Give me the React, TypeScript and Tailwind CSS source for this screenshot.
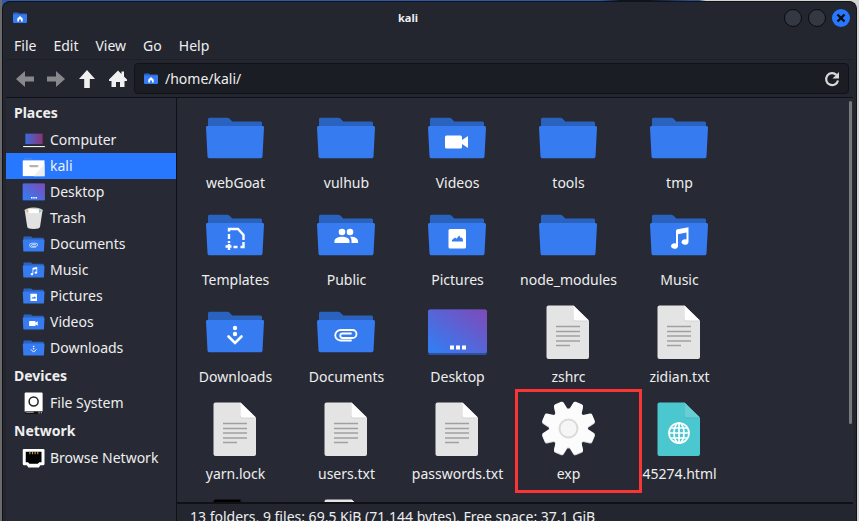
import type { ReactNode } from 'react';

type Kind =
  | 'folder' | 'videos' | 'templates' | 'public' | 'pictures' | 'music'
  | 'downloads' | 'documents' | 'desktop' | 'text' | 'html' | 'exec'
  | 'computer' | 'home' | 'trash' | 'drive' | 'network' | 'black';

type Place = { name: string; kind: Kind };

const places: Place[] = [
  { name: 'Computer', kind: 'computer' },
  { name: 'kali', kind: 'home' },
  { name: 'Desktop', kind: 'desktop' },
  { name: 'Trash', kind: 'trash' },
  { name: 'Documents', kind: 'documents' },
  { name: 'Music', kind: 'music' },
  { name: 'Pictures', kind: 'pictures' },
  { name: 'Videos', kind: 'videos' },
  { name: 'Downloads', kind: 'downloads' },
];

const files: Place[] = [
  { name: 'webGoat', kind: 'folder' },
  { name: 'vulhub', kind: 'folder' },
  { name: 'Videos', kind: 'videos' },
  { name: 'tools', kind: 'folder' },
  { name: 'tmp', kind: 'folder' },
  { name: 'Templates', kind: 'templates' },
  { name: 'Public', kind: 'public' },
  { name: 'Pictures', kind: 'pictures' },
  { name: 'node_modules', kind: 'folder' },
  { name: 'Music', kind: 'music' },
  { name: 'Downloads', kind: 'downloads' },
  { name: 'Documents', kind: 'documents' },
  { name: 'Desktop', kind: 'desktop' },
  { name: 'zshrc', kind: 'text' },
  { name: 'zidian.txt', kind: 'text' },
  { name: 'yarn.lock', kind: 'text' },
  { name: 'users.txt', kind: 'text' },
  { name: 'passwords.txt', kind: 'text' },
  { name: 'exp', kind: 'exec' },
  { name: '45274.html', kind: 'html' },
];

const emblems: Partial<Record<Kind, ReactNode>> = {
  videos: (
    <path d="M21.500 29.500h14q1.500 0 1.500 1.500v3l6-4v12l-6-4v3q0 1.500-1.500 1.500h-14q-1.500 0-1.500-1.500v-10q0-1.500 1.500-1.500z" fill="#fff" />
  ),
  templates: (
    <g fill="none" stroke="#fff" strokeWidth="2.400">
      <path d="M26 28.500v-2.500h9l5.500 6v5M40.500 39v5h-3" />
      <path d="M26 31v5M26 38v2M34.500 44h-4M22.500 43.500h6M26 41v6" />
    </g>
  ),
  public: (
    <g fill="#fff">
      <circle cx="28" cy="29" r="3.300" />
      <circle cx="36" cy="29" r="3.300" />
      <path d="M20.500 40v-2c0-3 4.500-4.300 7.500-4.300s7.500 1.300 7.500 4.300v2z" />
      <path d="M36 33.800c3.500-.3 8 1.200 8 4.200v2h-6.500v-2c0-1.800-.5-3.100-1.500-4.200z" />
    </g>
  ),
  pictures: (
    <>
      <rect x="23.500" y="26" width="17.500" height="19.500" rx="1.500" fill="#fff" />
      <path d="M27 38.500v-1.500l3-2.500 1.500 1.200 2.700-3.200 1.600 2.500 1.200-.5 1 2.500v1.500z" fill="#367bf0" />
    </>
  ),
  music: (
    <path d="M29 28q0-1.500 1.500-1.700l11-2.100v14.800a3.500 2.800 0 1 1-2-2.500v-7l-8.500 1.700v11.800a3.500 2.800 0 1 1-2-2.500z" fill="#fff" />
  ),
  downloads: (
    <g fill="#fff">
      <circle cx="32" cy="28" r="2.200" />
      <circle cx="32" cy="34" r="2.200" />
      <path d="M25.500 36.500l6.500 6.500 6.500-6.500" fill="none" stroke="#fff" strokeWidth="2.600" strokeLinecap="round" />
    </g>
  ),
  documents: (
    <path d="M37 40.500H26.500a5 5 0 0 1 0-10.500H38.500a4 4 0 0 1 0 8H28.500a2 2 0 0 1 0-4.500H37" fill="none" stroke="#fff" strokeWidth="1.800" strokeLinecap="round" />
  ),
};

function Folder({ children }: { children?: ReactNode }) {
  return (
    <>
      <path d="M5 24V13.200q0-1.500 1.500-1.500h18q1 0 1.800.8l3 3h28.200q1.500 0 1.500 1.500V24z" fill="#2a62c0" />
      <path d="M4.500 20h55q1.600 0 1.500 1.500L59.500 50.500q-.1 1.700-1.500 1.700H6q-1.400 0-1.500-1.700L3 21.500q-.1-1.500 1.500-1.500z" fill="#367bf0" />
      {children}
    </>
  );
}

function Sheet({ color, fold, children }: { color: string; fold: string; children?: ReactNode }) {
  return (
    <>
      <path d="M12.500 5.500H37.500L53 21V57q0 2-2 2H12.500q-2 0-2-2V7.500q0-2 2-2z" fill={color} />
      <path d="M37 6.500V18.500q0 3 3 3H52z" fill="#000" opacity=".08" />
      <path d="M37.500 5.500V18.500q0 2 2 2H53z" fill={fold} />
      {children}
    </>
  );
}

function Gear() {
  return (
    <>
      {[{ y: 1, c: '#d2d2d2' }, { y: 0, c: '#fcfcfc' }].map(({ y, c }) => (
        <g key={y} transform={`translate(32.500 ${31 + y})`} fill={c} stroke={c} strokeWidth="4" strokeLinejoin="round">
          <circle r="17.500" />
          {[22.500, 67.500, 112.500, 157.500, 202.500, 247.500, 292.500, 337.500].map((a) => (
            <path key={a} d="M-4.600 -17L-3.200 -25H3.200L4.600 -17z" transform={`rotate(${a})`} />
          ))}
        </g>
      ))}
      <circle cx="32.500" cy="31.500" r="9" fill="#f6f6f6" stroke="#dadada" strokeWidth="2" />
    </>
  );
}

function FileIcon({ kind, className }: { kind: Kind; className: string }) {
  let art: ReactNode;
  switch (kind) {
    case 'desktop':
      art = (
        <>
          <defs>
            <linearGradient id="wall" x1="0" y1="1" x2="1" y2="0">
              <stop offset=".1" stopColor="#367bf0" />
              <stop offset="1" stopColor="#8049b8" />
            </linearGradient>
          </defs>
          <rect x="3" y="9.500" width="59" height="45.500" rx="2" fill="#2d4f9f" />
          <rect x="3" y="9.500" width="59" height="43.500" rx="2" fill="url(#wall)" />
          <path d="M25 45.500h4v4h-4zM31 45.500h4v4h-4zM37 45.500h4v4h-4z" fill="#fff" />
        </>
      );
      break;
    case 'text':
      art = (
        <Sheet color="#e4e4e4" fold="#fff">
          <path d="M20 26.500h24M20 31.500h24M20 36h24M20 41h24M20 45.500h14" stroke="#a0a0a0" strokeWidth="1.300" />
        </Sheet>
      );
      break;
    case 'black':
      art = <Sheet color="#000" fold="#272a34" />;
      break;
    case 'html':
      art = (
        <Sheet color="#4bc7cf" fold="#68ced3">
          <g fill="none" stroke="#fff" strokeWidth="1.700">
            <circle cx="32" cy="36" r="10" />
            <ellipse cx="32" cy="36" rx="5" ry="10" />
            <path d="M32 26v20M22 36h20M23.500 31h17M23.500 41h17" />
          </g>
        </Sheet>
      );
      break;
    case 'exec':
      art = <Gear />;
      break;
    case 'computer':
      art = (
        <>
          <defs>
            <linearGradient id="screen" x1="0" y1="0" x2="1" y2="0">
              <stop offset="0" stopColor="#3b6be0" />
              <stop offset="1" stopColor="#8a3573" />
            </linearGradient>
          </defs>
          <path d="M10 15h46v28H10z" fill="url(#screen)" />
          <path d="M4 48h58v3H4z" fill="#f2f2f2" />
        </>
      );
      break;
    case 'home':
      art = (
        <>
          <path d="M5 20v-7q0-3 3-3h18l5 5h26q2 0 2 2v5z" fill="#3a82f5" />
          <path d="M3 17h58v42H3z" fill="#fff" />
          <path d="M61 27v32H32z" fill="#eee" />
          <rect x="20" y="29" width="25" height="6" rx="3" fill="#b3b3b3" />
        </>
      );
      break;
    case 'trash':
      art = (
        <>
          <path d="M8 10L15 56q1 5 17 5t17-5L56 10z" fill="#e2e2e2" />
          <ellipse cx="32" cy="12" rx="24" ry="8" fill="#cfcfcf" />
          <path d="M13 14q2-6 12-7l20 2 6 5-7 5H20z" fill="#fff" />
          <path d="M12 12l5-3 2 7-4 1z" fill="#e3bd62" />
          <path d="M47 10l5 3-5 5z" fill="#58b6b0" />
        </>
      );
      break;
    case 'drive':
      art = (
        <>
          <rect x="8" y="4" width="48" height="52" rx="3" fill="#fff" />
          <circle cx="32" cy="28" r="12" fill="none" stroke="#222" strokeWidth="4" />
          <path d="M10 54h46v7H10z" fill="#111" />
          <path d="M12 55h20v3H12zM45 55h3v5h-3zM51 55h3v5h-3z" fill="#aaa" />
        </>
      );
      break;
    case 'network':
      art = (
        <>
          <path d="M6 8h52q3 0 3 3v36q0 4-4 4h-7l-4 6H18l-4-6H7q-4 0-4-4V11q0-3 3-3z" fill="#fff" />
          <path d="M11 15h42v28h-6l-4 4H21l-4-4h-6z" fill="#000" />
          <path d="M22 16v6M29 16v6M36 16v6M43 16v6" stroke="#c79a3c" strokeWidth="3" />
        </>
      );
      break;
    default:
      art = <Folder>{emblems[kind]}</Folder>;
  }
  return (
    <svg viewBox="1 0 64 64" className={className} aria-hidden="true">
      {art}
    </svg>
  );
}

function HomeFolder() {
  return (
    <svg viewBox="0 0 16 16" className="size-4 shrink-0" aria-hidden="true">
      <path d="M1 3.500q0-1 1-1h4l1 1h7q1 0 1 1v3H1z" fill="#2a62c0" />
      <path d="M1 4.500h14v7.500q0 1-1 1H2q-1 0-1-1z" fill="#367bf0" />
      <path d="M8 6l2.700 2.500v3H9V9.500H7v2H5.300v-3z" fill="#fff" />
    </svg>
  );
}

function ToolButton({ label, d, dim }: { label: string; d: string; dim?: boolean }) {
  return (
    <button aria-label={label} className={dim ? 'text-[#87888c]' : 'text-[#f0f0f0]'}>
      <svg viewBox="0 0 20 20" className="size-5" fill="currentColor">
        <path d={d} />
      </svg>
    </button>
  );
}

function PlaceRow({ place, active }: { place: Place; active?: boolean }) {
  return (
    <button className={`flex h-[26px] w-full items-center gap-1 pl-4 ${active ? 'bg-[#2777ff]' : ''}`}>
      <FileIcon kind={place.kind} className="size-6 shrink-0" />
      {place.name}
    </button>
  );
}

function Heading({ children }: { children: ReactNode }) {
  return <h2 className="flex h-[29px] items-center pl-2 font-bold">{children}</h2>;
}

export default function App() {
  return (
    <div className="h-screen overflow-hidden bg-[linear-gradient(90deg,#6b6b6b_0_2px,#2f5aa8_2px_600px,#0c1424_620px_650px,#2b4f92_690px_699px,#d4d4d4_706px)] px-0.5 pt-px font-['Noto_Sans',sans-serif] text-[14px] leading-5 text-[#eeeeef]">
      <div className="flex h-full flex-col rounded-t-lg border-x border-t border-[#101217] bg-[#23262f] px-[3px]">
        <header className="flex h-[31px] shrink-0 items-center gap-1 pr-[3px] pl-1.5">
          <HomeFolder />
          <h1 className="flex-1 pl-1 text-center text-[11px] font-bold">kali</h1>
          <div className="flex gap-1.5">
            <button aria-label="Minimize" className="size-[18px] rounded-full border border-[#0a0b0e] bg-[#343843]" />
            <button aria-label="Maximize" className="size-[18px] rounded-full border border-[#0a0b0e] bg-[#343843]" />
            <button aria-label="Close" className="size-[18px] rounded-full bg-[#2777ff]">
              <svg viewBox="0 0 18 18" className="size-[18px]">
                <path d="M5.500 5.500l7 7M12.500 5.500l-7 7" stroke="#0b0d12" strokeWidth="2.400" />
              </svg>
            </button>
          </div>
        </header>

        <nav className="flex h-[26px] shrink-0 items-center gap-[17px] pl-2">
          {['File', 'Edit', 'View', 'Go', 'Help'].map((item) => (
            <button key={item}>{item}</button>
          ))}
        </nav>

        <div className="flex h-[39px] shrink-0 items-center border-t border-b border-t-[#1e2028] border-b-[#0f1116] pr-1 pl-[9px]">
          <div className="flex w-[119px] shrink-0 gap-[11px]">
            <ToolButton dim label="Back" d="M1 10L10 2V7.500H19V12.500H10V18z" />
            <ToolButton dim label="Forward" d="M19 10L10 2V7.500H1V12.500H10V18z" />
            <ToolButton label="Up" d="M10 1L18 10H12.800V19H7.200V10H2z" />
            <ToolButton label="Home" d="M10 1.500L13.500 5V2.500H16V7.500L19 10.500V12H16.500V18H12V13H8V18H3.500V12H1V10.500z" />
          </div>
          <div className="flex h-[31px] flex-1 items-center gap-1.5 rounded border border-[#101217] bg-[#1b1d24] px-2">
            <HomeFolder />
            <input aria-label="Location" defaultValue="/home/kali/" className="min-w-0 flex-1 bg-transparent outline-none" />
            <button aria-label="Reload">
              <svg viewBox="0 0 16 16" className="size-4" fill="none">
                <path d="M12.500 4A6 6 0 1 0 14 9.500" stroke="#d8d8d8" strokeWidth="2.200" />
                <path d="M15 1v6.500H8.500z" fill="#d8d8d8" />
              </svg>
            </button>
          </div>
        </div>

        <div className="flex min-h-0 flex-1">
          <aside className="w-[171px] shrink-0 border-r border-[#0f1116] bg-[#272a34]">
            <Heading>Places</Heading>
            {places.map((p) => (
              <PlaceRow key={p.name} place={p} active={p.name === 'kali'} />
            ))}
            <Heading>Devices</Heading>
            <PlaceRow place={{ name: 'File System', kind: 'drive' }} />
            <Heading>Network</Heading>
            <PlaceRow place={{ name: 'Browse Network', kind: 'network' }} />
          </aside>

          <div className="flex min-w-0 flex-1 flex-col">
            <main className="flex min-h-0 flex-1 overflow-hidden bg-[#272a34]">
              <div className="grid flex-1 auto-rows-[97px] grid-cols-[repeat(auto-fill,111px)] pr-8 pl-[3px]">
                {files.map((f) => (
                  <div key={f.name} className="relative flex flex-col items-center gap-[3px] pt-2">
                    <FileIcon kind={f.kind} className="size-16" />
                    <span>{f.name}</span>
                    {f.kind === 'exec' && (
                      <div className="absolute top-0 -right-[18px] left-[2px] z-10 h-[104px] border-3 border-[#fb3434]" />
                    )}
                  </div>
                ))}
                <div className="flex justify-center pt-2">
                  <FileIcon kind="black" className="size-16" />
                </div>
                <div className="flex justify-center pt-2">
                  <FileIcon kind="text" className="size-16" />
                </div>
              </div>
              <div className="mt-[3px] mr-px h-4/5 w-[3px] rounded-full bg-[#77797c]" />
            </main>
            <footer className="h-[19px] shrink-0 border-t-2 border-[#0f1116] pt-[3px] pl-[13px] whitespace-nowrap">
              13 folders, 9 files: 69.5 KiB (71,144 bytes), Free space: 37.1 GiB
            </footer>
          </div>
        </div>
      </div>
    </div>
  );
}
